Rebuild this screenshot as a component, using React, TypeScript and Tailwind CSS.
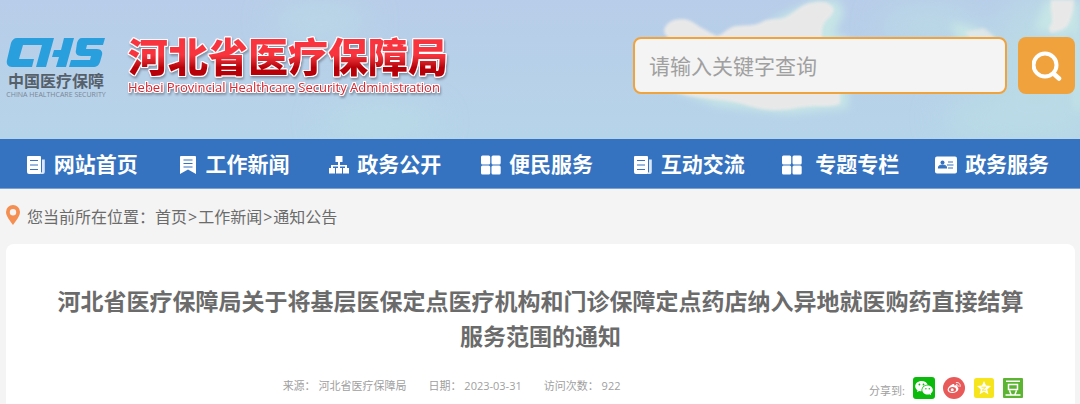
import type { ReactNode } from "react";

type NavItem = {
  label: string;
  icon: ReactNode;
};

const fontStack =
  "font-['Open_Sans','Noto_Sans_CJK_SC',sans-serif]";

function NewsIcon() {
  return (
    <svg viewBox="0 0 20 20" className="size-5" aria-hidden="true">
      <path
        fill="#fff"
        d="M2 1h12a1 1 0 0 1 1 1v16a1 1 0 0 1-1 1H3a2 2 0 0 1-2-2V2a1 1 0 0 1 1-1z"
      />
      <path d="M16 4.500h2.800V17a2 2 0 0 1-2 2H14l2-2.200z" fill="#dbe7f6" />
      <path d="M4 5.500h8M4 10h8M4 14.500h8" stroke="#3573c0" strokeWidth="1.200" />
    </svg>
  );
}

function BookmarkIcon() {
  return (
    <svg viewBox="0 0 20 20" className="size-5" aria-hidden="true">
      <path fill="#fff" d="M3 1h14a1 1 0 0 1 1 1v17l-8-4.500L2 19V2a1 1 0 0 1 1-1z" />
      <path d="M5.500 5h9M5.500 8.500h9M5.500 12h9" stroke="#3573c0" strokeWidth="1.100" />
    </svg>
  );
}

function SitemapIcon() {
  return (
    <svg viewBox="0 0 20 20" className="size-5" aria-hidden="true">
      <path
        fill="#fff"
        d="M6.500 1h7v6H11v3h7v3h2v5.500h-6V13h2v-1.500h-5V13h2v5.500H7V13h2v-1.500H4V13h2v5.500H0V13h2v-3h7V7H6.500z"
      />
    </svg>
  );
}

function GridIcon() {
  return (
    <svg viewBox="0 0 20 20" className="size-5" fill="#fff" aria-hidden="true">
      <rect x="0" y="0.500" width="9.200" height="9" rx="1.500" />
      <rect x="10.500" y="0.500" width="9.200" height="9" rx="1.500" />
      <rect x="0" y="10.500" width="9.200" height="9" rx="1.500" />
      <rect x="10.500" y="10.500" width="9.200" height="9" rx="1.500" />
    </svg>
  );
}

function CardIcon() {
  return (
    <svg viewBox="0 0 22 20" className="h-5 w-[22px]" aria-hidden="true">
      <rect x="0" y="1.500" width="22" height="17" rx="2" fill="#fff" />
      <circle cx="7.500" cy="7.600" r="2" fill="#3573c0" />
      <path d="M3.500 13c0-4 8-4 8 0zM13 7h5M12 10h6.500M13 13h5" fill="#3573c0" stroke="#3573c0" strokeWidth="1.200" />
    </svg>
  );
}

const navItems: NavItem[] = [
  { label: "网站首页", icon: <NewsIcon /> },
  { label: "工作新闻", icon: <BookmarkIcon /> },
  { label: "政务公开", icon: <SitemapIcon /> },
  { label: "便民服务", icon: <GridIcon /> },
  { label: "互动交流", icon: <NewsIcon /> },
  { label: "\u00a0专题专栏", icon: <GridIcon /> },
  { label: "政务服务", icon: <CardIcon /> },
];

function Sky() {
  return (
    <svg
      viewBox="0 0 1080 139"
      preserveAspectRatio="none"
      className="absolute inset-0 size-full"
      aria-hidden="true"
    >
      <defs>
        <linearGradient id="sky" x1="0" y1="0" x2="0" y2="1">
          <stop offset="0" stopColor="#b8cde9" />
          <stop offset="1" stopColor="#b6d4e9" />
        </linearGradient>
        <filter id="soft" x="-20%" y="-20%" width="140%" height="140%">
          <feGaussianBlur stdDeviation="1.500" />
        </filter>
        <filter id="edge" x="-20%" y="-20%" width="140%" height="140%">
          <feGaussianBlur stdDeviation="4" />
        </filter>
        <filter id="haze" x="-20%" y="-100%" width="140%" height="300%">
          <feGaussianBlur stdDeviation="16" />
        </filter>
      </defs>
      <rect width="1080" height="139" fill="url(#sky)" />
      <g filter="url(#haze)" fill="#bce0e4" opacity=".6">
        <ellipse cx="320" cy="20" rx="50" ry="16" />
        <ellipse cx="380" cy="122" rx="60" ry="16" />
        <ellipse cx="930" cy="25" rx="50" ry="20" />
        <ellipse cx="1040" cy="60" rx="50" ry="70" />
        <ellipse cx="1020" cy="118" rx="80" ry="26" />
      </g>
      <g filter="url(#edge)" fill="#c6e5e6">
        <path d="M780 16l34-16h24l6 12-10 22 14 4v70l-60 6-70-8-50-18z" />
        <path d="M950 22l20 4 24 10v6h-36z" />
        <path d="M1046 0h34v110h-6V30l-12 8-16-6-12-2z" />
      </g>
      <g filter="url(#soft)" fill="#e8e8e8">
        <path d="M664 30c2-8 10-11 18-11 10 0 15 7 22 10 4 2 8 5 13 7 7-2 10-8 18-10 10-1 20 0 27-4 6-4 13-2 22-4 9-4 16-13 26-15 9-1 15-3 22 3 5 5-2 11-7 16-3 5-3 10-3 18H672c-5-2-8-6-8-10z" />
        <path d="M672 90h168v14c-12 4-22 1-36 3-10 1-20 4-34 3-12-1-20-4-32-7-14-4-52-4-66-13z" />
        <path d="M964 32l20-4 10 8v4h-22z" opacity=".7" />
        <path d="M1051 0h23c0 8-2 18-6 25-4 6-12 6-16 8-4-2-4-6 0-10 0-8-2-16-1-23z" />
      </g>
    </svg>
  );
}

function ChsLogo() {
  return (
    <div className="flex w-25 flex-col items-center pt-1.5">
      <svg viewBox="0 0 98 29" className="h-[29px] w-full" fill="#2a9fdd" aria-label="CHS" role="img">
        <path d="M10 0h37l-8 29H29l6-22H16l-4 14h15l-2 8H5c-4 0-6-3-5-7L4 5c1-3 3-5 6-5z" />
        <path d="M47 12h7l3-12h10l-8 29H49l3-10h-7z" />
        <path d="M75 0h23l-2 7H80l-1 4h11c4 0 6 3 5 6l-2 7c-1 3-3 5-7 5H62l2-7h19l1-4H74c-4 0-6-3-5-6l1-7c1-3 2-5 5-5z" />
      </svg>
      <span className="mt-1 text-[16px] leading-5 font-bold text-[#56606b]">中国医疗保障</span>
      <span className="text-[7px] leading-2 whitespace-nowrap text-[#7b8794]">
        CHINA HEALTHCARE SECURITY
      </span>
    </div>
  );
}

function Header() {
  return (
    <header className="relative flex h-[139px] items-center justify-between pr-[5px] pb-2 pl-1.5">
      <Sky />
      <div className="relative flex items-center gap-[22px]">
        <ChsLogo />
        <div className="[filter:drop-shadow(1px_0_#fff)_drop-shadow(-1px_0_#fff)_drop-shadow(0_1px_#fff)_drop-shadow(0_-1px_#fff)_drop-shadow(1px_2px_1px_#8493a6)]">
          <h1 className="bg-linear-to-b from-[#f8353f] from-45% to-[#b80008] to-75% bg-clip-text text-[40px] leading-[42px] font-black text-transparent">
            河北省医疗保障局
          </h1>
          <p className="text-[13px] leading-[18px] font-medium whitespace-nowrap text-[#dc2430]">
            Hebei Provincial Healthcare Security Administration
          </p>
        </div>
      </div>
      <form className="relative flex gap-[11px]" onSubmit={(e) => e.preventDefault()}>
        <input
          type="text"
          aria-label="请输入关键字查询"
          placeholder="请输入关键字查询"
          className="h-[57px] w-[374px] rounded-lg border-2 border-[#f0a23c] bg-[#f4f4f4] px-3.5 text-[21px] text-gray-600 outline-none placeholder:text-[#a0a0a0]"
        />
        <button
          type="submit"
          aria-label="搜索"
          className="flex h-[57px] w-[57px] items-center justify-center rounded-lg bg-[#f0a23c]"
        >
          <svg viewBox="0 0 30 30" className="size-[30px]" fill="none" stroke="#fff" strokeLinecap="round" aria-hidden="true">
            <circle cx="13" cy="14" r="11.500" strokeWidth="4" />
            <path d="M22 23l5 4.500" strokeWidth="4.500" />
          </svg>
        </button>
      </form>
    </header>
  );
}

function MainNav() {
  return (
    <nav className="grid grid-cols-7 border-b border-[#79a3d8] bg-[#3573c0] pr-3 pl-1.5">
      {navItems.map((item) => (
        <a
          key={item.label}
          href="#"
          className="flex h-[49px] items-center justify-center gap-2 pt-0.5 text-[21px] font-bold whitespace-nowrap text-white"
        >
          {item.icon}
          {item.label}
        </a>
      ))}
    </nav>
  );
}

function Breadcrumb() {
  return (
    <div className="flex items-center gap-[7px] px-1.5 pt-4 pb-[15px] text-[16px] leading-6 text-[#6b6b6b]">
      <svg viewBox="0 0 14 20" className="mb-1 h-5 w-3.5" aria-hidden="true">
        <path
          fill="#f58f51"
          fillRule="evenodd"
          d="M7 0a7 7 0 0 1 7 7c0 4-3.500 8-7 13C3.500 15 0 11 0 7a7 7 0 0 1 7-7zm0 4a3.200 3.200 0 1 0 0 6.400A3.200 3.200 0 0 0 7 4z"
        />
      </svg>
      <p>
        您当前所在位置：<a href="#">首页</a>
        <span className="px-px">&gt;</span>
        <a href="#">工作新闻</a>
        <span className="px-px">&gt;</span>
        <a href="#">通知公告</a>
      </p>
    </div>
  );
}

function ShareLinks() {
  return (
    <div className="flex items-center gap-2">
      <span className="pt-1.5 text-[11px]">分享到:</span>
      <a href="#" aria-label="微信">
        <svg viewBox="0 0 22 22" className="size-[22px]">
          <rect width="22" height="22" rx="3" fill="#0bbb0b" />
          <path
            fill="#fff"
            d="M8.500 4C5 4 2.200 6.300 2.200 9.200c0 1.600.9 3 2.300 4L4 15l2.200-1.100c.8.2 1.500.3 2.300.3C8.200 10.500 11 7.800 14.700 7.800 14 5.600 11.600 4 8.500 4z"
          />
          <path
            fill="#fff"
            d="M14.600 8.600c-3 0-5.300 2-5.300 4.500s2.300 4.500 5.300 4.500c.6 0 1.200-.1 1.800-.3l1.800 1-.5-1.600c1.300-.9 2.100-2.200 2.100-3.600 0-2.500-2.300-4.500-5.200-4.500z"
          />
          <g fill="#0bbb0b">
            <circle cx="6.400" cy="7.500" r=".9" />
            <circle cx="10.500" cy="7.500" r=".9" />
            <circle cx="12.900" cy="11.700" r=".7" />
            <circle cx="16.300" cy="11.700" r=".7" />
          </g>
        </svg>
      </a>
      <a href="#" aria-label="微博">
        <svg viewBox="0 0 22 22" className="size-[22px]">
          <circle cx="11" cy="11" r="11" fill="#e85a5a" />
          <path
            fill="#fff"
            d="M9.500 7.300c1.300-.5 2.200 0 1.800 1.400 1.800-.7 3.300-.3 2.900 1.400 2.500 1 1.200 5.900-4.700 5.900-6.500 0-6.500-5.500 0-8.700z"
          />
          <ellipse cx="9.500" cy="12.500" rx="3.600" ry="2.500" fill="#e85a5a" />
          <circle cx="9.200" cy="12.700" r="1.500" fill="#fff" />
          <path d="M13.300 5.600c2.600-.5 4.500 1.500 3.800 4M13.400 7.600c1.200-.1 2 .6 1.800 1.800" fill="none" stroke="#fff" strokeWidth=".9" strokeLinecap="round" />
        </svg>
      </a>
      <a href="#" aria-label="QQ空间">
        <svg viewBox="0 0 20 20" className="mx-px size-5">
          <rect width="20" height="20" rx="2.500" fill="#f6e51c" />
          <path fill="#fff" d="M10 3l2 4.600 5 .5-3.800 3.300 1.200 4.900L10 13.700l-4.400 2.600 1.200-4.900L3 8.100l5-.5z" />
          <path d="M7.500 9.200h4.200l-3.500 3h4" fill="none" stroke="#f6e51c" strokeWidth=".9" />
        </svg>
      </a>
      <a href="#" aria-label="豆瓣">
        <svg viewBox="0 0 20 20" className="size-5">
          <rect width="20" height="20" rx="1" fill="#5cb531" />
          <path
            d="M3 3.200h14M5.500 6.500h9v5h-9zM6.500 12.500l1.500 4M13.500 12.500l-1.500 4M2.500 17h15"
            fill="none"
            stroke="#fff"
            strokeWidth="1.500"
          />
        </svg>
      </a>
    </div>
  );
}

function Article() {
  return (
    <article className="mr-[5px] ml-1.5 rounded-t-lg bg-white px-10 pt-10">
      <h2 className="px-2 text-center text-[23px] leading-[35px] font-bold text-[#6b6b6b]">
        河北省医疗保障局关于将基层医保定点医疗机构和门诊保障定点药店纳入异地就医购药直接结算服务范围的通知
      </h2>
      <div className="mt-[23px] flex items-center pr-3 pb-1 text-[11px] text-[#a0a0a0]">
        <p className="flex flex-1 justify-center gap-[22px] pr-3 pb-1 whitespace-nowrap">
          <span>来源： 河北省医疗保障局</span>
          <span>日期： 2023-03-31</span>
          <span>访问次数： 922</span>
        </p>
        <ShareLinks />
      </div>
    </article>
  );
}

export default function App() {
  return (
    <div className={`min-h-screen bg-[#f4f4f4] ${fontStack}`}>
      <Header />
      <MainNav />
      <Breadcrumb />
      <Article />
    </div>
  );
}
